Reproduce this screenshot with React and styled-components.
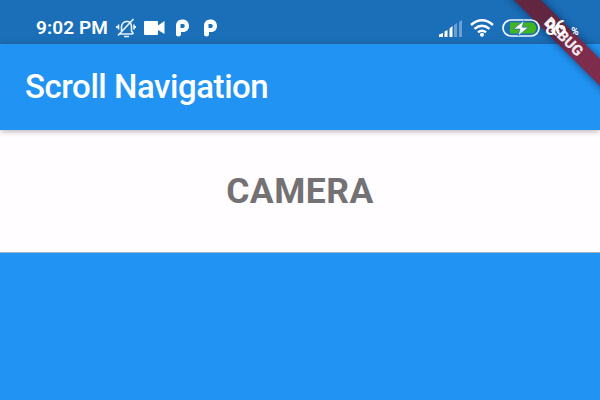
import React from "react";
import styled, { createGlobalStyle } from "styled-components";

const GlobalStyle = createGlobalStyle`
  * { box-sizing: border-box; }
  body { margin: 0; overflow: hidden; font-family: Roboto, sans-serif; }
`;

const Screen = styled.div`
  position: relative;
  width: 600px;
  height: 400px;
  overflow: hidden;
  display: flex;
  flex-direction: column;
  background: #2194f3;
`;

const StatusBar = styled.header`
  height: 44px;
  flex: none;
  display: flex;
  padding: 12px 21px 0 36px;
  background: #1b6fb8;
  color: #fff;
`;

const StatusGroup = styled.div`
  display: flex;
  align-items: center;
  height: 32px;
`;

const Clock = styled.time`
  width: 80px;
  font-size: 19px;
  font-weight: 600;
  line-height: 32px;
  letter-spacing: 0.1px;
  white-space: nowrap;
`;

const Icon = styled.svg`
  display: block;
  flex: none;
  width: ${(p) => p.$w}px;
  height: ${(p) => p.$h}px;
  margin-right: ${(p) => p.$gap || 0}px;
`;

const Charge = styled.span`
  display: flex;
  align-items: baseline;
  font-size: 20px;
  font-weight: 500;
  line-height: 32px;
  letter-spacing: -1.3px;
`;

const Percent = styled.span`
  width: 8px;
  margin-left: 6px;
  font-size: 10px;
  font-weight: 700;
  line-height: 12px;
  letter-spacing: 0;
`;

const AppBar = styled.div`
  position: relative;
  z-index: 1;
  height: 86px;
  flex: none;
  display: flex;
  align-items: center;
  padding: 0 25px;
  background: #2194f3;
  box-shadow: 0 1px 6px rgba(60, 45, 50, 0.4);
`;

const Title = styled.h1`
  margin: 0;
  color: #fff;
  font-size: 33px;
  font-weight: 500;
  line-height: 40px;
  letter-spacing: -0.45px;
`;

const Page = styled.main`
  height: 123px;
  flex: none;
  display: flex;
  align-items: center;
  justify-content: center;
  padding-bottom: 1px;
  background: #fffdff;
  border-bottom: 1px solid #a5b4c5;
`;

const PageLabel = styled.h2`
  margin: 0;
  color: #737173;
  font-size: 35.5px;
  font-weight: 700;
  line-height: 42px;
  letter-spacing: 0.5px;
`;

const Ribbon = styled.div`
  position: absolute;
  z-index: 2;
  top: 27px;
  left: 463.5px;
  width: 200px;
  height: 19px;
  transform: rotate(45deg);
  background: linear-gradient(90deg, #632640 0 48%, #7d2c4b 58%);
  box-shadow: 0 0 9px rgba(0, 20, 60, 0.6);
  color: #f4e8ee;
  font-size: 15px;
  font-weight: 900;
  line-height: 20px;
  text-align: center;
`;

const PowerStatus = styled.div`
  position: absolute;
  z-index: 3;
  top: 12px;
  left: 439px;
  color: #fff;
`;

function MutedBell() {
  return (
    <Icon viewBox="0 0 20 20" $w={20} $h={20} $gap={8} fill="none" stroke="#e8f2fa" strokeWidth="1.6">
      <path d="M3.500 16H17M5.500 13V8.500Q6 4 10.500 3.500T15.500 8.500V13l2 3M8 18.500h5M2.500 6.500v5M.8 8v2M18 6.500v5M19.500 8v2M2 17.500 17.500 1" />
    </Icon>
  );
}

function VideoCamera() {
  return (
    <Icon viewBox="0 0 21 14" $w={21} $h={14} $gap={10} fill="#fff">
      <path d="M1 0h12Q14 0 14 1V4.500L20.500 0V13L14 9v4Q14 14 13 14H1Q0 14 0 13V1Q0 0 1 0Z" />
    </Icon>
  );
}

function ParkingMark({ gap }) {
  return (
    <Icon viewBox="0 0 14 18" $w={14} $h={18} $gap={gap} fill="#fff">
      <path
        fillRule="evenodd"
        d="M1 7C1 2.500 4 .5 7.500 .5C11.500 .5 14 3.200 14 7S11.500 13 8 13H6V15.500Q6 17.500 3.500 17.500T1 15.500ZM5.500 5V9H8Q9.800 8.800 9.800 7T8 5Z"
      />
    </Icon>
  );
}

function Signal() {
  return (
    <Icon viewBox="0 0 23 17" $w={23} $h={17} $gap={8} fill="#fff">
      <path d="M0 14.500 4 13v4H0ZM5.500 11.500 8.500 10v7h-3ZM10.500 8.500 13.500 6v11h-3Z" />
      <path d="M15 5l3-2v14h-3ZM20 2l3-2v17h-3Z" opacity=".35" />
    </Icon>
  );
}

function Wifi() {
  return (
    <Icon viewBox="0 0 24 18" $w={24} $h={18} $gap={8} fill="none" stroke="#fff" strokeWidth="2.400">
      <path d="M1 6Q12-3.500 23 6M4.500 9.800Q12 3.500 19.500 9.800M8 13.400Q12 10 16 13.400" />
      <circle cx="12" cy="15.700" r="2" fill="#fff" stroke="none" />
    </Icon>
  );
}

function Battery() {
  return (
    <Icon viewBox="0 0 38 18" $w={38} $h={18} $gap={5} fill="none">
      <rect x="1" y="1" width="36" height="16" rx="8" stroke="#f2f6f7" strokeWidth="1.700" />
      <path d="M8 3.500h22q3 0 4.500 5.500-1.500 5.500-4.500 5.500H8Z" fill="#42b51f" />
      <path d="M22 1.500 11.500 10h6.500L16 17 26.500 8.200h-6.300Z" fill="#fff" stroke="#1b6fb8" strokeWidth=".7" />
    </Icon>
  );
}

export default function App() {
  return (
    <>
      <GlobalStyle />
      <Screen>
        <StatusBar>
          <StatusGroup>
            <Clock>9:02 PM</Clock>
            <MutedBell />
            <VideoCamera />
            <ParkingMark gap={14} />
            <ParkingMark />
          </StatusGroup>
        </StatusBar>
        <AppBar>
          <Title>Scroll Navigation</Title>
        </AppBar>
        <Page>
          <PageLabel>CAMERA</PageLabel>
        </Page>
        <Ribbon>DEBUG</Ribbon>
        <PowerStatus>
          <StatusGroup>
            <Signal />
            <Wifi />
            <Battery />
            <Charge>
              86<Percent>%</Percent>
            </Charge>
          </StatusGroup>
        </PowerStatus>
      </Screen>
    </>
  );
}
